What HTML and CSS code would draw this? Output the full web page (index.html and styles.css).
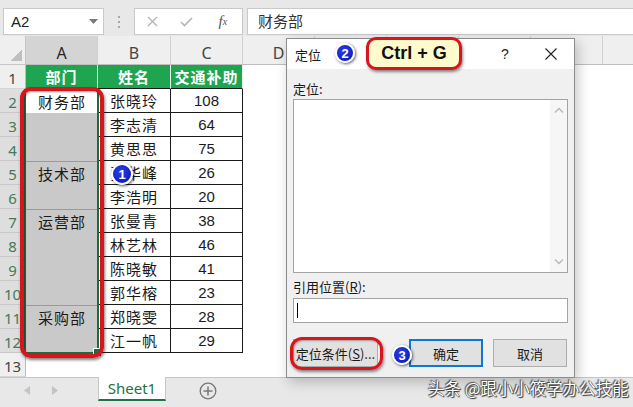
FILE: index.html
```html
<!DOCTYPE html>
<html lang="zh">
<head>
<meta charset="utf-8">
<link rel="stylesheet" href="styles.css">
</head>
<body>
<div class="app">
  <header class="fbar">
    <div class="namebox"><span>A2</span><svg class="dd" width="9" height="6" viewBox="0 0 9 6"><path d="M0 0H9L4.5 5Z" fill="#7a7a7a"/></svg></div>
    <div class="grip"><i></i><i></i><i></i></div>
    <div class="fbtns">
      <span class="fb"><svg width="11" height="11" viewBox="0 0 11 11"><path d="M1 1L10 10M10 1L1 10" stroke="#b4b4b4" stroke-width="1.4"/></svg></span>
      <span class="fb"><svg width="13" height="10" viewBox="0 0 13 10"><path d="M1 5L4.5 8.5L12 1" stroke="#b4b4b4" stroke-width="1.6" fill="none"/></svg></span>
      <span class="fb fx">f<small>x</small></span>
    </div>
    <div class="finput">财务部</div>
  </header>

  <main class="sheet">
    <div class="corner"></div>
    <div class="ch sel">A</div>
    <div class="ch">B</div>
    <div class="ch">C</div>
    <div class="ch-rest"><span>D</span><span></span><span></span><span></span><span></span><span></span></div>

    <div class="rh">1</div><div class="hd">部门</div><div class="hd">姓名</div><div class="hd">交通补助</div><div class="rest"></div>
    <div class="rh sel">2</div><div class="a active">财务部</div><div class="c">张晓玲</div><div class="c n">108</div>
    <div class="rh sel">3</div><div class="a grp g2 nb"></div><div class="c">李志清</div><div class="c n">64</div>
    <div class="rh sel">4</div><div class="c">黄思思</div><div class="c n">75</div>
    <div class="rh sel">5</div><div class="a grp g2">技术部</div><div class="c">张华峰</div><div class="c n">26</div>
    <div class="rh sel">6</div><div class="c">李浩明</div><div class="c n">20</div>
    <div class="rh sel">7</div><div class="a grp g4">运营部</div><div class="c">张曼青</div><div class="c n">38</div>
    <div class="rh sel">8</div><div class="c">林艺林</div><div class="c n">46</div>
    <div class="rh sel">9</div><div class="c">陈晓敏</div><div class="c n">41</div>
    <div class="rh sel">10</div><div class="c">郭华榕</div><div class="c n">23</div>
    <div class="rh sel">11</div><div class="a grp g2">采购部</div><div class="c">郑晓雯</div><div class="c n">28</div>
    <div class="rh sel">12</div><div class="c">江一帆</div><div class="c n">29</div>
    <div class="rh">13</div><div class="e"></div><div class="e"></div><div class="e"></div>

    <div class="selbox"></div>
    <div class="ring"></div>
    <span class="badge badge-1">1</span>
  </main>

  <footer class="tabs">
    <div class="nav">
      <svg width="6" height="9" viewBox="0 0 6 9"><path d="M6 0V9L0 4.5Z" fill="#c4c4c4"/></svg>
      <svg width="6" height="9" viewBox="0 0 6 9"><path d="M0 0V9L6 4.5Z" fill="#c4c4c4"/></svg>
    </div>
    <div class="tab">Sheet1</div>
    <svg class="plus" width="18" height="18" viewBox="0 0 18 18"><circle cx="9" cy="9" r="7.8" fill="none" stroke="#767676" stroke-width="1.3"/><path d="M9 4.5V13.5M4.5 9H13.5" stroke="#767676" stroke-width="1.5"/></svg>
  </footer>

  <div class="dlg">
    <div class="dlg-title">
      <span class="dt">定位</span>
      <span class="tbtn">?</span>
      <span class="tbtn"><svg width="12" height="12" viewBox="0 0 12 12"><path d="M0.5 0.5L11.5 11.5M11.5 0.5L0.5 11.5" stroke="#222" stroke-width="1.1"/></svg></span>
    </div>
    <div class="dlg-body">
      <div class="lbl">定位:</div>
      <div class="list">
        <div class="sb">
          <svg width="10" height="6" viewBox="0 0 10 6"><path d="M1 5.5L5 1.5L9 5.5" stroke="#b8b8b8" stroke-width="1.3" fill="none"/></svg>
          <svg width="10" height="6" viewBox="0 0 10 6"><path d="M1 0.5L5 4.5L9 0.5" stroke="#b8b8b8" stroke-width="1.3" fill="none"/></svg>
        </div>
      </div>
      <div class="lbl lbl2">引用位置(<u>R</u>):</div>
      <div class="input"><i class="caret"></i></div>
      <div class="btns">
        <button class="b b1">定位条件(<u>S</u>)...</button>
        <button class="b b2">确定</button>
        <button class="b b3">取消</button>
      </div>
    </div>
    <span class="badge badge-2">2</span>
    <div class="callout">Ctrl + G</div>
    <div class="ring2"></div>
    <span class="badge badge-3">3</span>
  </div>

  <div class="wm">头条 @跟小小筱学办公技能</div>
</div>
</body>
</html>
```

FILE: styles.css
```css
* { box-sizing: border-box; margin: 0; padding: 0; }
html, body { width: 633px; height: 407px; overflow: hidden; }
body { font-family: "Noto Sans CJK SC", "Noto Sans", sans-serif; background: #fff; color: #1a1a1a; }

.app { position: relative; width: 633px; height: 407px; display: flex; flex-direction: column; overflow: hidden; }

/* formula bar */
.fbar { flex: none; height: 36px; background: #e8e8e8; display: flex; align-items: flex-start; padding: 8px 0 0 3px; }
.namebox { width: 101px; height: 27px; background: #fff; border: 1px solid #c9c9c9; display: flex; align-items: center; justify-content: space-between; padding: 0 5px 0 7px; font: 15px "Liberation Sans", sans-serif; color: #222; }
.grip { width: 4px; height: 27px; margin-left: 14px; display: flex; flex-direction: column; justify-content: center; gap: 3px; }
.grip i { display: block; width: 2px; height: 2px; background: #a8a8a8; }
.fbtns { width: 109px; height: 27px; margin-left: 12px; background: #fff; border: 1px solid #c9c9c9; display: flex; align-items: center; }
.fb { width: 36px; display: flex; justify-content: center; align-items: center; }
.fb.fx { width: 40px; }
.fx { font: italic 15px "Liberation Serif", serif; color: #555; }
.fx small { font-size: 10px; }
.finput { flex: 1; height: 27px; margin-left: 4px; background: #fff; border: 1px solid #c9c9c9; border-right: 0; padding-left: 10px; font-size: 15px; line-height: 24px; color: #333; }

/* sheet grid */
.sheet { position: relative; flex: none; height: 341px; display: grid; grid-template-columns: 26px 72px 73px 72px 1fr; grid-template-rows: 29px repeat(13, 24px); }
.corner { background: #efefef linear-gradient(135deg, transparent 50%, #bfbfbf 50%) no-repeat right 3px bottom 3px / 11px 11px; border-right: 1px solid #c6c6c6; border-bottom: 1px solid #c6c6c6; }
.ch { background: #efefef; border-right: 1px solid #d0d0d0; border-bottom: 1px solid #bdbdbd; display: flex; align-items: flex-end; justify-content: center; padding-bottom: 1px; font: 16px "Noto Sans", sans-serif; color: #444; line-height: 20px; }
.ch.sel { background: #d4d4d4; color: #262626; }
.ch-rest { background: #efefef; border-bottom: 1px solid #bdbdbd; display: flex; overflow: hidden; }
.ch-rest span { flex: none; width: 72px; border-right: 1px solid #d0d0d0; display: flex; align-items: flex-end; justify-content: center; padding-bottom: 1px; font: 16px "Noto Sans", sans-serif; color: #444; line-height: 20px; }

.rh { background: #efefef; border-right: 1px solid #bdbdbd; border-bottom: 1px solid #d6d6d6; display: flex; align-items: center; justify-content: center; padding-top: 2px; font: 15px "Noto Sans", sans-serif; color: #444; }
.rh.sel { background: #dedede; color: #44795a; border-bottom-color: #c8c8c8; }

.hd { background: #1fa550; color: #fff; font-weight: bold; font-size: 15px; display: flex; align-items: center; justify-content: center; border-right: 1px solid #e8f3ec; border-bottom: 1px solid #1a1a1a; letter-spacing: 1px; }
.c { border-right: 1px solid #1a1a1a; border-bottom: 1px solid #1a1a1a; display: flex; align-items: center; justify-content: center; font-size: 15px; letter-spacing: 1px; color: #1a1a1a; }
.c.n { font: 15px "Liberation Sans", sans-serif; letter-spacing: 0; }
.a { font-size: 15px; letter-spacing: 1px; text-align: center; line-height: 23px; color: #1a1a1a; }
.a.active { background: #fff; display: flex; align-items: center; justify-content: center; }
.a.grp { background: #c9c9c9; border-top: 1px solid #9a9a9a; }
.a.grp.nb { border-top: 0; }
.g2 { grid-row: span 2; }
.g4 { grid-row: span 4; }
.rest { grid-row: span 13; background: #fff; }
.e { background: #fff; }

/* overlays on the sheet */
.selbox { position: absolute; left: 24px; top: 53px; width: 75px; height: 265px; border: 2px solid #1e6c3e; }
.selbox::after { content: ""; position: absolute; right: -5px; bottom: -5px; width: 7px; height: 7px; background: #1e6c3e; border: 1px solid #fff; }
.ring { position: absolute; left: 20px; top: 51px; width: 84px; height: 271px; border: 4px solid #d8141c; border-radius: 11px; box-shadow: 1px 2px 3px rgba(0,0,0,.5), inset 1px 1px 2px rgba(0,0,0,.35); }

.badge { position: absolute; width: 20px; height: 20px; border-radius: 50%; background: radial-gradient(circle at 40% 35%, #2a3ee6, #0613b4); border: 2px solid #fff; box-shadow: 1px 1px 3px rgba(0,0,0,.65); color: #fff; font: bold 13px "Liberation Sans", sans-serif; display: flex; align-items: center; justify-content: center; }
.badge-1 { left: 111px; top: 127px; width: 22px; height: 22px; }

/* tabs */
.tabs { flex: 1; background: #e8e8e8; border-top: 1px solid #c6c6c6; display: flex; align-items: flex-start; }
.nav { width: 98px; height: 24px; display: flex; align-items: center; gap: 22px; padding-left: 24px; }
.tab { width: 68px; height: 24px; margin-top: -1px; background: #fff; border-left: 1px solid #c6c6c6; border-right: 1px solid #c6c6c6; border-bottom: 2px solid #217346; color: #217346; font: 15px "Noto Sans", sans-serif; display: flex; align-items: center; justify-content: center; }
.plus { margin: 4px 0 0 33px; }

/* dialog */
.dlg { position: absolute; left: 286px; top: 38px; width: 289px; height: 340px; background: #f0f0f0; border: 1px solid #8c8c8c; box-shadow: 3px 4px 12px rgba(0,0,0,.22); display: flex; flex-direction: column; }
.dlg-title { flex: none; height: 30px; background: #fff; display: flex; align-items: center; padding-left: 8px; font-size: 13px; color: #1a1a1a; }
.dt { flex: 1; }
.tbtn { width: 46px; height: 30px; display: flex; align-items: center; justify-content: center; font: 14px "Liberation Sans", sans-serif; color: #222; }
.dlg-body { flex: 1; padding: 11px 6px 0 6px; }
.lbl { font-size: 13px; line-height: 18px; color: #1a1a1a; }
.lbl u { text-underline-offset: 1px; }
.list { margin-top: 1px; height: 174px; background: #fff; border: 1px solid #a3a3a3; display: flex; justify-content: flex-end; }
.sb { width: 17px; background: #f6f6f6; display: flex; flex-direction: column; justify-content: space-between; align-items: center; padding: 7px 0 7px; }
.lbl2 { margin-top: 5px; }
.input { margin-top: 2px; height: 25px; background: #fff; border: 1px solid #a3a3a3; display: flex; align-items: center; padding-left: 3px; }
.caret { display: block; width: 1px; height: 15px; background: #000; }
.btns { margin-top: 16px; display: flex; }
.b { height: 28px; background: #e1e1e1; border: 1px solid #adadad; font: 13px "Noto Sans CJK SC", sans-serif; color: #1a1a1a; }
.b1 { width: 85px; }
.b2 { width: 74px; margin-left: 31px; border: 2px solid #0a78d4; }
.b3 { width: 74px; margin-left: 10px; }

.badge-2 { left: 48px; top: 4px; }
.badge-3 { left: 105px; top: 306px; }
.callout { position: absolute; left: 79px; top: -2px; width: 96px; height: 33px; background: #fdfacb; border: 3px solid #d8141c; border-radius: 10px; box-shadow: 1px 2px 3px rgba(0,0,0,.45); display: flex; align-items: center; justify-content: center; font: bold 18px "Liberation Sans", sans-serif; color: #111; }
.ring2 { position: absolute; left: 3px; top: 298px; width: 93px; height: 33px; border: 3px solid #d8141c; border-radius: 12px; box-shadow: 1px 2px 3px rgba(0,0,0,.45), inset 1px 1px 2px rgba(0,0,0,.3); }

/* watermark */
.wm { position: absolute; left: 428px; top: 378px; font-size: 16.5px; line-height: 20px; color: #fff; text-shadow: 0 0 1px #222, 1px 1px 1px #333, -1px -1px 1px #555; letter-spacing: 0; }
```
